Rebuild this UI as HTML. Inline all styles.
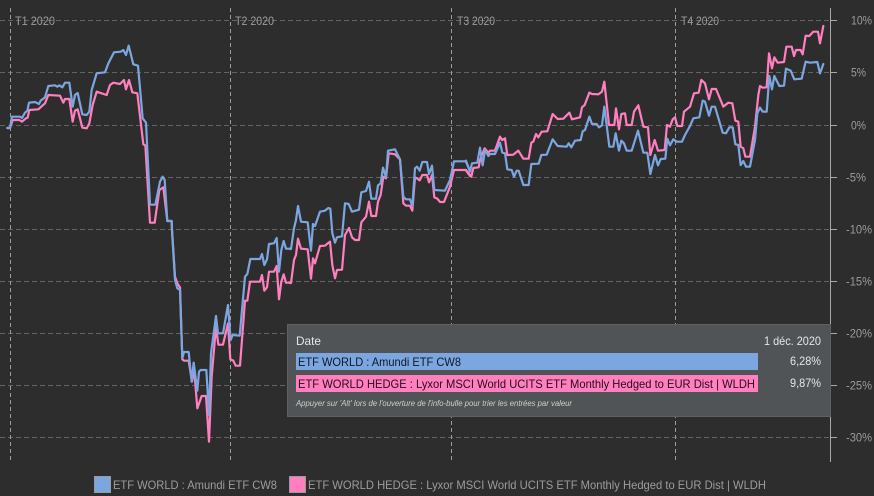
<!DOCTYPE html>
<html><head><meta charset="utf-8"><style>
html,body{margin:0;padding:0;background:#2d2d2d;width:874px;height:496px;overflow:hidden}
svg{display:block;font-family:"Liberation Sans",sans-serif}
</style></head><body>
<svg width="874" height="496" viewBox="0 0 874 496" xmlns="http://www.w3.org/2000/svg">
<rect width="874" height="496" fill="#2d2d2d"/>
<g stroke="#646464" stroke-width="1" stroke-dasharray="5 3" fill="none">
<path d="M0 20.5H830M0 72.5H830M0 125.5H830M0 177.5H830M0 229.5H830M0 281.5H830M0 333.5H830M0 385.5H830M0 437.5H830"/>
</g>
<g stroke="#9e9e9e" stroke-width="1" stroke-dasharray="4 3" fill="none">
<path d="M10.5 8V462M230.5 8V462M451.5 8V462M675.5 8V462"/>
</g>
<path d="M830.5 8V462" stroke="#a8a8a8" fill="none"/>
<path d="M830 20.5h7M830 72.5h7M830 125.5h7M830 177.5h7M830 229.5h7M830 281.5h7M830 333.5h7M830 385.5h7M830 437.5h7" stroke="#a8a8a8" fill="none"/>
<g font-size="12" fill="#9c9c9c">
<text x="15" y="25" textLength="40" lengthAdjust="spacingAndGlyphs">T1 2020</text>
<text x="235" y="25" textLength="39" lengthAdjust="spacingAndGlyphs">T2 2020</text>
<text x="457" y="25" textLength="38" lengthAdjust="spacingAndGlyphs">T3 2020</text>
<text x="681" y="25" textLength="38" lengthAdjust="spacingAndGlyphs">T4 2020</text>
<text x="851" y="24.500" textLength="21" lengthAdjust="spacingAndGlyphs">10%</text>
<text x="851" y="76.500" textLength="15" lengthAdjust="spacingAndGlyphs">5%</text>
<text x="851" y="129.500" textLength="15" lengthAdjust="spacingAndGlyphs">0%</text>
<text x="846" y="181.500" textLength="20" lengthAdjust="spacingAndGlyphs">-5%</text>
<text x="846" y="233.500" textLength="26" lengthAdjust="spacingAndGlyphs">-10%</text>
<text x="846" y="285.500" textLength="26" lengthAdjust="spacingAndGlyphs">-15%</text>
<text x="846" y="337.500" textLength="26" lengthAdjust="spacingAndGlyphs">-20%</text>
<text x="846" y="389.500" textLength="26" lengthAdjust="spacingAndGlyphs">-25%</text>
<text x="846" y="441.500" textLength="26" lengthAdjust="spacingAndGlyphs">-30%</text>
</g>

<g fill="none" stroke="#ff7fbf" stroke-linejoin="round" stroke-linecap="round" stroke-width="6.600">
<g transform="scale(.33333)"><polyline points="22,384 30,384 38,360 58,360 66,365 78,355 83,353 88,330 115,328 135,310 145,285 180,287 190,308 195,297 208,297 218,365 225,332 233,328 247,383 260,385 268,370 278,315 290,275 320,285 330,255 340,248 360,252 372,240 378,268 387,240 397,277 412,280 430,433 436,436 450,668 464,668 478,570 490,562 502,663 515,663 516,690"/></g>
<g transform="translate(120,230) scale(.33333)"><polyline points="156,0 165,140 172,160 180,172 187,388 192,392 206,392 216,455 222,415 232,535 245,498 258,498 267,635 275,440 288,290 295,344 309,344 324,280 331,388 340,392 347,407 360,407 375,212 382,212 390,155 420,155 426,135 433,182 441,172 447,125 462,125 470,108 477,208 484,155 491,133 498,158 510,158"/></g>
<g transform="translate(230,100) scale(.33333)"><polyline points="180,549 183,549 192,480 198,465 204,416 213,446 233,448 243,536 249,475 255,490 270,438 285,437 300,425 307,495 315,535 321,510 336,509 345,405 357,384 366,412 375,420 387,420 394,367 408,350 417,305 424,348 438,348 444,305 452,285 460,230 468,235 476,160 495,163 510,178 520,310 528,317 540,317 547,332 555,232 561,235 569,241 577,225 591,225 597,247 606,225 613,292 622,296 630,306 642,306 660,260 672,210 707,210 720,228"/></g>
<g transform="translate(450,60) scale(.33333)"><polyline points="48,330 64,350 70,324 86,322 90,300 104,265 115,278 120,272 135,272 150,230 156,240 165,235 172,285 190,284 205,272 220,296 236,296 244,248 250,245 258,222 265,232 275,215 292,214 308,162 323,177 340,176 358,158 366,178 390,172 396,142 404,135 418,98 426,102 445,103 456,95 463,65 477,195 493,195 498,145 507,208 514,162 525,160 530,195 545,195 552,155 565,136 580,200 594,202 601,285 614,240 624,272 644,270 651,195 660,200 668,178 675,172 682,198 696,198 702,155 720,140"/></g>
<g transform="translate(670,0) scale(.33333)"><polyline points="60,320 72,280 86,278 94,240 105,250 117,298 125,267 138,267 160,320 175,308 187,310 196,362 205,365 212,440 220,445 226,470 240,470 255,380 265,285 270,258 278,263 290,262 297,160 306,205 313,172 323,188 342,186 349,140 365,140 372,168 378,150 392,150 398,163 407,107 418,108 430,95 444,95 450,130 460,78"/></g>
</g>

<g fill="none" stroke="#7ba6e0" stroke-linejoin="round" stroke-linecap="round" stroke-width="6.600">
<g transform="scale(.33333)"><polyline points="22,384 30,384 36,350 60,350 66,354 75,338 82,332 87,308 105,306 117,312 122,302 135,292 145,258 165,256 172,260 178,256 187,262 195,248 208,248 218,320 225,285 233,279 247,343 260,345 268,335 275,270 290,220 315,217 325,190 342,157 362,155 370,150 378,165 386,137 400,193 414,197 428,355 438,368 450,614 466,614 480,545 488,530 494,540 502,663 515,663 516,690"/></g>
<g transform="translate(120,230) scale(.33333)"><polyline points="156,0 165,150 172,175 180,180 187,385 192,366 206,366 215,455 221,398 232,482 237,425 242,420 259,420 267,555 273,370 288,258 294,310 309,310 324,225 332,330 338,315 359,317 375,140 382,132 391,87 420,87 426,72 433,105 441,88 447,42 462,40 470,24 477,125 484,60 491,33 498,56 510,56"/></g>
<g transform="translate(230,100) scale(.33333)"><polyline points="180,447 183,447 192,385 198,360 204,318 213,365 233,367 243,452 249,372 255,378 270,335 285,332 295,324 301,326 307,400 315,428 321,412 336,409 345,310 356,312 366,335 387,329 394,277 408,273 417,245 424,296 438,296 444,256 452,250 459,203 468,232 474,152 495,148 510,178 520,290 528,298 540,298 547,318 555,205 561,200 569,212 577,186 591,186 597,222 606,197 613,270 645,272 660,240 672,184 707,184 720,212"/></g>
<g transform="translate(450,60) scale(.33333)"><polyline points="48,302 60,335 66,310 82,308 90,263 98,316 105,270 115,288 120,282 135,282 150,248 157,278 165,280 172,328 185,330 192,350 200,332 206,332 220,375 236,375 244,312 266,311 274,285 290,284 308,238 323,258 350,260 356,250 364,262 375,242 392,240 398,214 405,210 418,170 426,192 440,192 447,202 456,196 463,140 478,260 490,260 497,220 507,272 514,242 522,250 530,272 545,272 564,212 580,278 592,278 601,342 615,285 624,316 632,297 646,296 652,236 660,256 670,238 680,245 696,245 705,225 720,198"/></g>
<g transform="translate(670,0) scale(.33333)"><polyline points="60,378 70,355 88,352 98,302 105,305 117,347 125,320 135,320 158,398 168,400 178,382 188,382 196,433 205,435 212,495 220,483 228,500 240,500 255,420 262,340 270,323 278,335 290,335 298,228 306,268 313,228 328,258 342,257 348,206 362,212 373,238 395,236 407,185 420,188 442,186 450,220 460,192"/></g>
</g>

<rect x="287.500" y="324.500" width="543" height="92" fill="#505456" stroke="#5f6062"/>
<text x="296" y="345" font-size="12" fill="#e6e6e6" textLength="25" lengthAdjust="spacingAndGlyphs">Date</text>
<text x="764" y="345" font-size="12" fill="#e6e6e6" textLength="57" lengthAdjust="spacingAndGlyphs">1 déc. 2020</text>
<rect x="296" y="353" width="462" height="17" fill="#7ba6e0"/>
<text x="298" y="366" font-size="12" fill="#101828" textLength="163" lengthAdjust="spacingAndGlyphs">ETF WORLD : Amundi ETF CW8</text>
<text x="790" y="365" font-size="12" fill="#e6e6e6" textLength="31" lengthAdjust="spacingAndGlyphs">6,28%</text>
<rect x="296" y="375" width="462" height="17" fill="#ff7fbf"/>
<text x="298" y="388" font-size="12" fill="#2a0a1c" textLength="457" lengthAdjust="spacingAndGlyphs">ETF WORLD HEDGE : Lyxor MSCI World UCITS ETF Monthly Hedged to EUR Dist | WLDH</text>
<text x="790" y="387" font-size="12" fill="#e6e6e6" textLength="31" lengthAdjust="spacingAndGlyphs">9,87%</text>
<text x="296" y="406" font-size="8" font-style="italic" fill="#d0d0c8" textLength="276" lengthAdjust="spacingAndGlyphs">Appuyer sur 'Alt' lors de l'ouverture de l'info-bulle pour trier les entrées par valeur</text>

<rect x="94.500" y="476.500" width="16" height="16" fill="#7ba6e0" stroke="#9a9a9a"/>
<text x="113" y="489" font-size="12" fill="#9c9c9c" textLength="164" lengthAdjust="spacingAndGlyphs">ETF WORLD : Amundi ETF CW8</text>
<rect x="289.500" y="476.500" width="16" height="16" fill="#ff7fbf" stroke="#9a9a9a"/>
<text x="308" y="489" font-size="12" fill="#9c9c9c" textLength="458" lengthAdjust="spacingAndGlyphs">ETF WORLD HEDGE : Lyxor MSCI World UCITS ETF Monthly Hedged to EUR Dist | WLDH</text>
</svg>
</body></html>
